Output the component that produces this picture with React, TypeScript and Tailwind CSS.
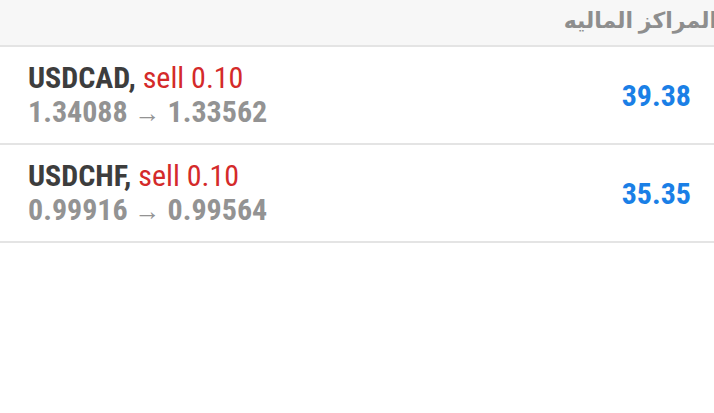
import React from "react";

const POSITIONS = [
  { symbol: "USDCAD", side: "sell", volume: "0.10", open: "1.34088", current: "1.33562", profit: "39.38" },
  { symbol: "USDCHF", side: "sell", volume: "0.10", open: "0.99916", current: "0.99564", profit: "35.35" },
];

export default function App() {
  return (
    <div className="w-[714px] h-[413px] overflow-hidden bg-white font-['Roboto',sans-serif]">
      {/* Header */}
      <div className="h-[47px] bg-[#f7f7f7] border-b-2 border-[#e4e4e4] flex items-center justify-end overflow-hidden">
        <span
          dir="rtl"
          className="mr-[-3px] mb-[6px] text-[22px] font-semibold text-[#8e8e8e] whitespace-nowrap font-['Noto_Sans','DejaVu_Sans',sans-serif]"
        >
          المراكز الماليه
        </span>
      </div>

      {POSITIONS.map((p) => (
        <div
          key={p.symbol}
          className="h-[98px] border-b-2 border-[#e4e4e4] flex items-center justify-between pl-[28px] pr-[23px] [font-stretch:condensed]"
        >
          <div className="flex flex-col leading-[34px] mt-[1px]">
            <div className="text-[30px] whitespace-nowrap">
              <span className="font-bold text-[#3d3d3d]">{p.symbol},</span>{" "}
              <span className="text-[#d42a2a]">
                {p.side} {p.volume}
              </span>
            </div>
            <div className="text-[30px] font-bold text-[#939393] whitespace-nowrap">
              {p.open} <span className="font-normal text-[26px]">→</span> {p.current}
            </div>
          </div>
          <div className="text-[30px] font-bold text-[#1a7fe6]">{p.profit}</div>
        </div>
      ))}
    </div>
  );
}
